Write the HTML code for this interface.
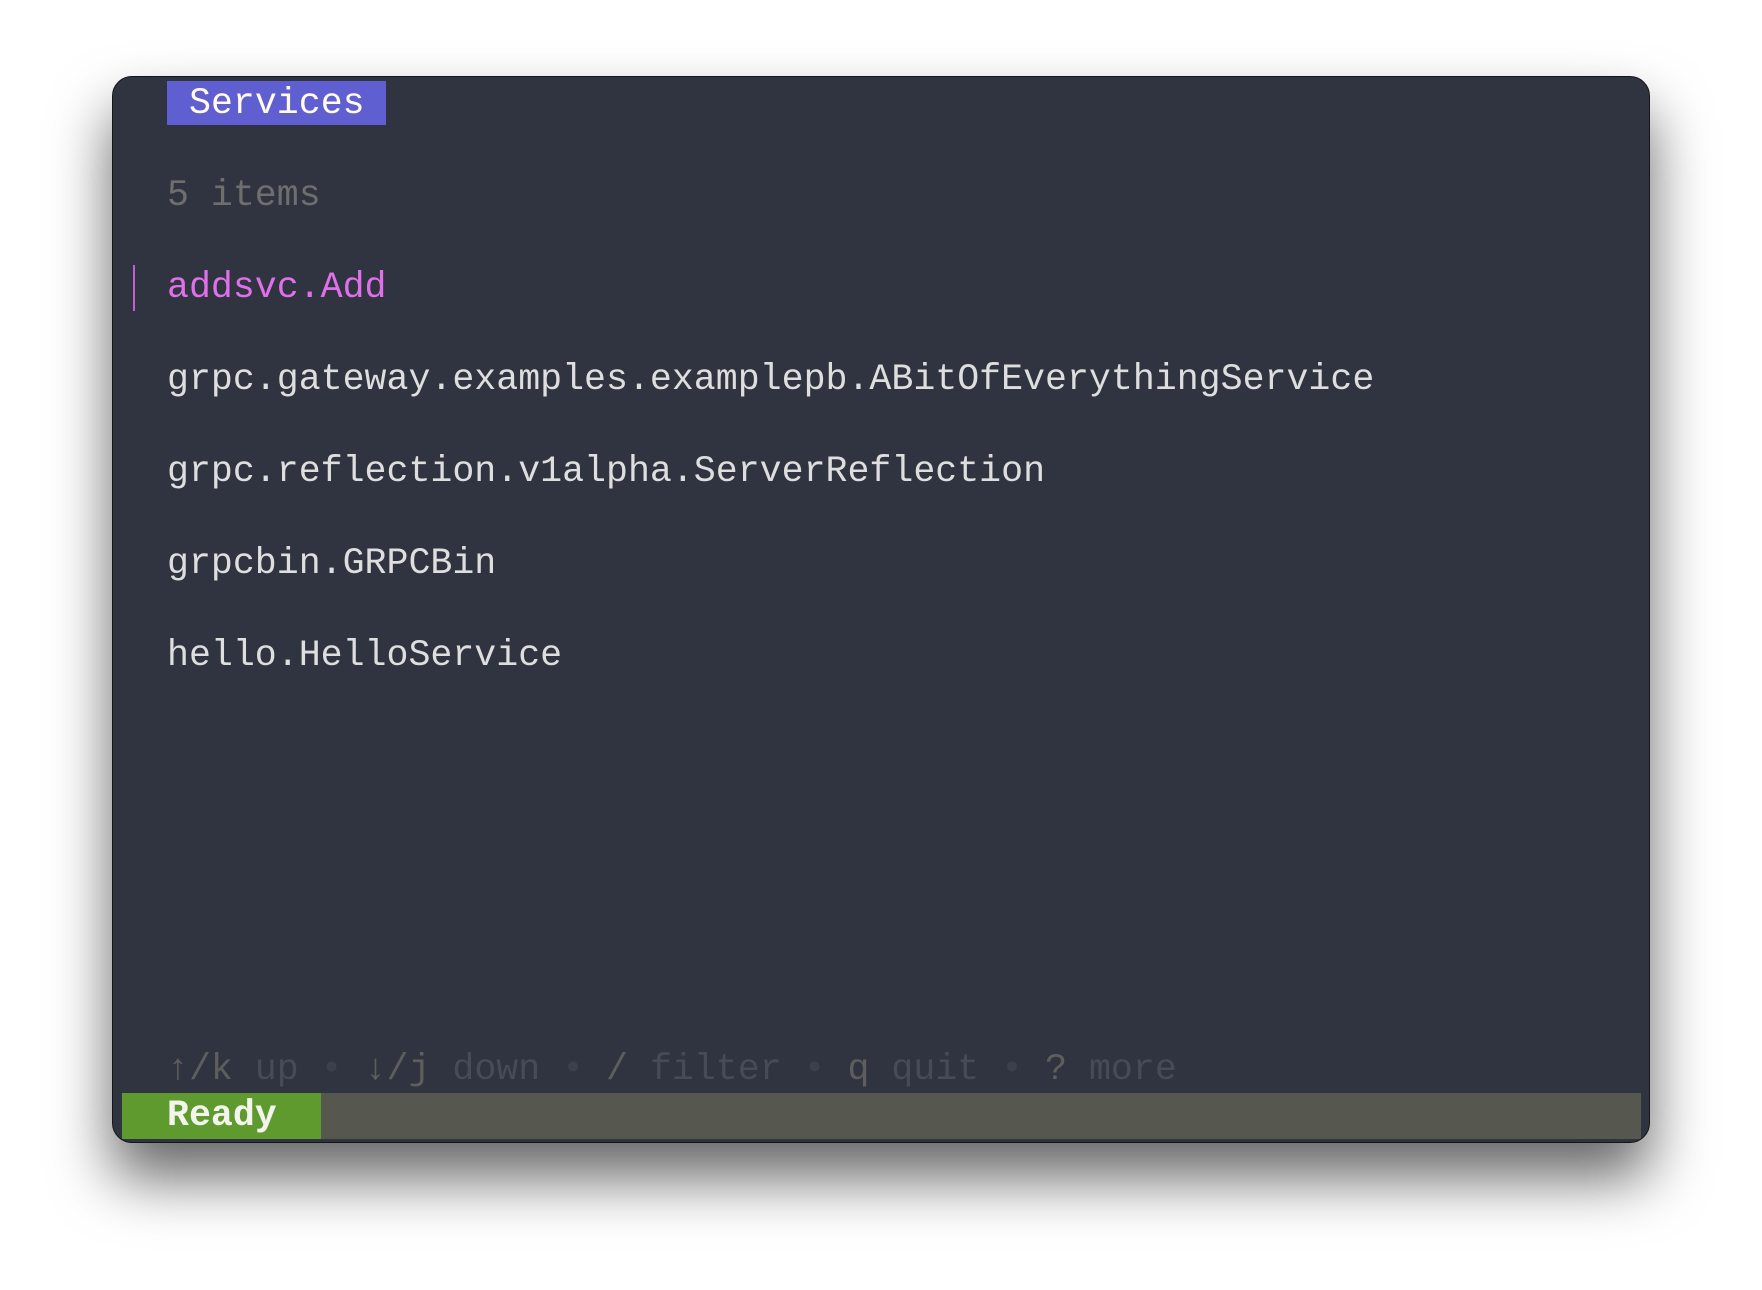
<!DOCTYPE html>
<html><head><meta charset="utf-8"><style>
html,body{margin:0;padding:0;background:#fff;width:1762px;height:1290px;overflow:hidden}
.win{position:absolute;left:112px;top:76px;width:1536px;height:1065px;background:#303440;border:1px solid #15161a;border-radius:20px;box-shadow:0 35px 60px rgba(0,0,0,0.6);overflow:hidden}
.t{position:absolute;font-family:"Liberation Mono",monospace;font-size:36.6px;line-height:37px;white-space:pre;color:#dedede}
</style></head><body>
<div class="win">
  <div style="position:absolute;left:54px;top:4px;width:219px;height:44px;background:#5f5fd2"></div>
  <div class="t" style="left:76px;top:8px;color:#fffbe6">Services</div>
  <div class="t" style="left:54px;top:100px;color:#6e6e6e">5 items</div>
  <div style="position:absolute;left:20px;top:188px;width:2px;height:46px;background:#c65ecb"></div>
  <div class="t" style="left:54px;top:192px;color:#e070ea">addsvc.Add</div>
  <div class="t" style="left:54px;top:284px">grpc.gateway.examples.examplepb.ABitOfEverythingService</div>
  <div class="t" style="left:54px;top:376px">grpc.reflection.v1alpha.ServerReflection</div>
  <div class="t" style="left:54px;top:468px">grpcbin.GRPCBin</div>
  <div class="t" style="left:54px;top:560px">hello.HelloService</div>
  <div class="t" style="left:54px;top:974px;color:#474b55"><span style="color:#5e5e5e">↑/k</span> up <span style="color:#3c404a">•</span> <span style="color:#5e5e5e">↓/j</span> down <span style="color:#3c404a">•</span> <span style="color:#5e5e5e">/</span> filter <span style="color:#3c404a">•</span> <span style="color:#5e5e5e">q</span> quit <span style="color:#3c404a">•</span> <span style="color:#5e5e5e">?</span> more</div>
  <div style="position:absolute;left:9px;top:1016px;width:1519px;height:46px;background:#565850"></div>
  <div style="position:absolute;left:9px;top:1016px;width:199px;height:46px;background:#5f9a2e"></div>
  <div class="t" style="left:54px;top:1020px;color:#f4f4ee;font-weight:bold">Ready</div>
</div>
</body></html>
